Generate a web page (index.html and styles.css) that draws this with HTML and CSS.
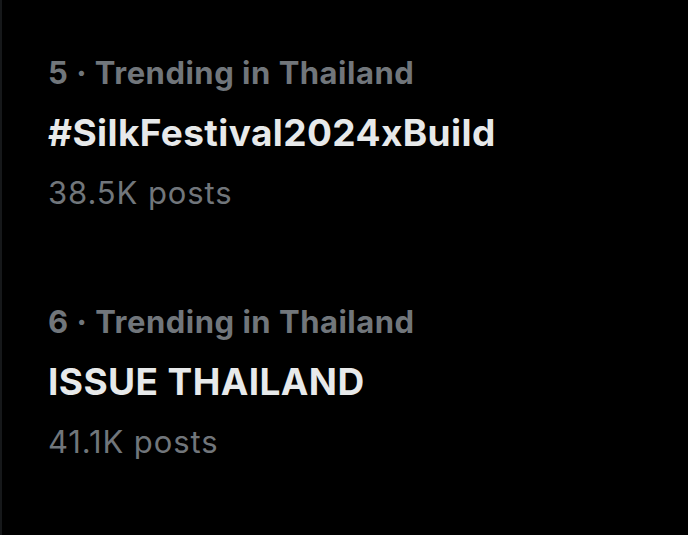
FILE: index.html
```html
<!DOCTYPE html>
<html lang="en">
<head>
<meta charset="utf-8">
<title>Trends</title>
<link rel="stylesheet" href="styles.css">
</head>
<body>
<section class="trends">
  <div class="trend">
    <div class="context">5 · Trending in Thailand</div>
    <div class="title">#SilkFestival2024xBuild</div>
    <div class="count">38.5K posts</div>
  </div>
  <div class="trend">
    <div class="context">6 · Trending in Thailand</div>
    <div class="title">ISSUE THAILAND</div>
    <div class="count">41.1K posts</div>
  </div>
</section>
</body>
</html>
```
FILE: styles.css
```css
html, body {
  margin: 0;
  padding: 0;
  background: #000;
}
body {
  width: 688px;
  height: 535px;
  overflow: hidden;
  font-family: Inter, "Noto Sans", sans-serif;
}
.trends {
  box-sizing: border-box;
  height: 535px;
  border-left: 2px solid #16181a;
  padding-top: 9px;
}
.trend {
  padding: 34px 46px 35px;
}
.context {
  font-size: 31px;
  line-height: 60px;
  font-weight: 700;
  letter-spacing: 0.5px;
  color: #71767b;
}
.title {
  font-size: 37px;
  line-height: 60px;
  font-weight: 700;
  letter-spacing: 0.4px;
  color: #e7e9ea;
}
.count {
  font-size: 31px;
  line-height: 60px;
  font-weight: 400;
  letter-spacing: 0.9px;
  color: #71767b;
}
```
